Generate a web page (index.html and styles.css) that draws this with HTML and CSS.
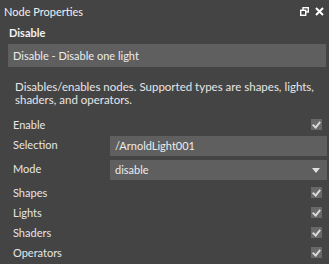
FILE: index.html
```html
<!DOCTYPE html>
<html>
<head>
  <title>Node Properties</title>
  <link rel="stylesheet" href="styles.css">
</head>
<body>
  <div class="panel">
    <div class="titlebar">
      <span class="title">Node Properties</span>
      <div class="win-btns">
        <!-- float / restore -->
        <svg width="9" height="9" viewBox="0 0 9 9" fill="none" stroke="#fff" stroke-width="1.4">
          <rect x="3" y="0.7" width="5.3" height="4.3"/>
          <rect x="0.7" y="3.3" width="5" height="5" fill="#444"/>
        </svg>
        <!-- close -->
        <svg width="9" height="9" viewBox="0 0 9 9" stroke="#fff" stroke-width="2">
          <path d="M1 1l7 7M8 1l-7 7"/>
        </svg>
      </div>
    </div>

    <div class="node-name">Disable</div>
    <div class="field wide">Disable - Disable one light</div>

    <p class="desc">Disables/enables nodes. Supported types are shapes, lights,<br>shaders, and operators.</p>

    <div class="props">
      <div class="row">
        <span class="label">Enable</span>
        <span class="check"></span>
      </div>
      <div class="row tall">
        <span class="label">Selection</span>
        <div class="field">/ArnoldLight001</div>
      </div>
      <div class="row tall">
        <span class="label">Mode</span>
        <div class="field select">disable <span class="arrow"></span></div>
      </div>
      <div class="row">
        <span class="label">Shapes</span>
        <span class="check"></span>
      </div>
      <div class="row">
        <span class="label">Lights</span>
        <span class="check"></span>
      </div>
      <div class="row">
        <span class="label">Shaders</span>
        <span class="check"></span>
      </div>
      <div class="row">
        <span class="label">Operators</span>
        <span class="check"></span>
      </div>
    </div>
  </div>
</body>
</html>
```

FILE: styles.css
```css
body {
  margin: 0;
  background: #444444;
  color: #e6e6e6;
  font-family: Lato, "Noto Sans", sans-serif;
  font-size: 11px;
}

.panel {
  width: 329px;
  height: 264px;
  overflow: hidden;
}

.titlebar {
  display: flex;
  justify-content: space-between;
  align-items: center;
  height: 22px;
  padding: 0 4px 0 4px;
}

.title {
  color: #f0f0f0;
}

.win-btns {
  display: flex;
  gap: 6px;
  align-items: center;
  padding-right: 1px;
}

.node-name {
  font-weight: bold;
  color: #f2f2f2;
  padding: 0 9px;
  height: 22px;
  line-height: 22px;
}

.field {
  background: #5f5f5f;
  height: 20px;
  line-height: 20px;
  padding: 0 5px;
  color: #ececec;
  box-sizing: border-box;
  flex: 1;
}

.field.wide {
  margin: 0 3px 0 8px;
  height: 23px;
  line-height: 23px;
}

.desc {
  margin: 13px 0 0 15px;
  font-size: 11.5px;
  line-height: 13px;
  white-space: nowrap;
  color: #e6e6e6;
}

.props {
  margin-top: 8px;
  padding: 0 2px 0 13px;
}

.row {
  display: flex;
  justify-content: space-between;
  align-items: center;
  height: 20px;
}

.row.tall {
  height: 24px;
}

.row.tall .label {
  margin-top: -3px;
}

.label {
  width: 97px;
}

.check {
  width: 11px;
  height: 11px;
  background: #686868;
  margin-right: 5px;
  position: relative;
}

.check::after {
  content: "";
  position: absolute;
  left: 3px;
  top: 1px;
  width: 3px;
  height: 6px;
  border: solid #d8d8d8;
  border-width: 0 2px 2px 0;
  transform: rotate(40deg);
}

.select {
  position: relative;
}

.arrow {
  position: absolute;
  right: 7px;
  top: 8px;
  border-left: 4px solid transparent;
  border-right: 4px solid transparent;
  border-top: 5px solid #e0e0e0;
}
```
